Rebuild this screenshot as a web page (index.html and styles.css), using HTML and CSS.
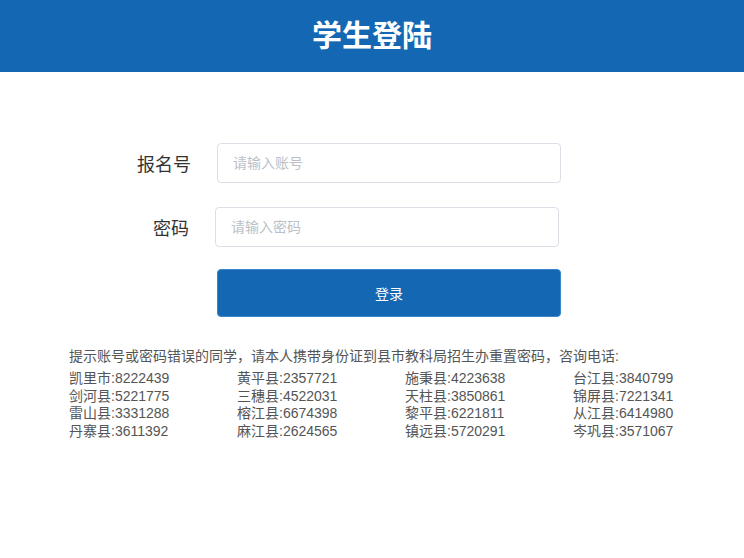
FILE: index.html
```html
<!DOCTYPE html>
<html>
<head>
  <meta charset="utf-8">
  <title>学生登陆</title>
  <link rel="stylesheet" href="styles.css">
</head>
<body>
  <div class="header">学生登陆</div>
  <div class="main">
    <form class="login">
      <div class="row">
        <label class="label" for="user">报名号</label>
        <input class="input" id="user" type="text" placeholder="请输入账号">
      </div>
      <div class="row row-pwd">
        <label class="label" for="pwd">密码</label>
        <input class="input" id="pwd" type="password" placeholder="请输入密码">
      </div>
      <div class="row">
        <span class="label"></span>
        <button class="btn" type="button">登录</button>
      </div>
    </form>
    <div class="tips">
      <p class="tips-title">提示账号或密码错误的同学，请本人携带身份证到县市教科局招生办重置密码，咨询电话:</p>
      <ul class="phones">
        <li>凯里市:8222439</li>
        <li>黄平县:2357721</li>
        <li>施秉县:4223638</li>
        <li>台江县:3840799</li>
        <li>剑河县:5221775</li>
        <li>三穗县:4522031</li>
        <li>天柱县:3850861</li>
        <li>锦屏县:7221341</li>
        <li>雷山县:3331288</li>
        <li>榕江县:6674398</li>
        <li>黎平县:6221811</li>
        <li>从江县:6414980</li>
        <li>丹寨县:3611392</li>
        <li>麻江县:2624565</li>
        <li>镇远县:5720291</li>
        <li>岑巩县:3571067</li>
      </ul>
    </div>
  </div>
</body>
</html>
```

FILE: styles.css
```css
*{margin: 0;padding: 0;box-sizing: border-box;}
ul{list-style: none;}
html, body{
  width: 100%;
  height: 100%;
  background-color: #ffffff;
  font-family: "Liberation Sans", "Noto Sans CJK SC", sans-serif;
  color: #333;
}
.header{
  height: 72px;
  line-height: 72px;
  background-color: #1468b3;
  color: #fff;
  text-align: center;
  font-size: 30px;
  font-weight: bold;
}
.main{
  padding-top: 71px;
}
.login{
  padding-left: 70px;
}
.row{
  display: flex;
  align-items: center;
  margin-bottom: 24px;
}
.row-pwd{
  margin-bottom: 22px;
}
.label{
  width: 121px;
  margin-right: 26px;
  text-align: right;
  font-size: 18px;
  color: #333;
}
.row-pwd .label{
  width: 119px;
}
.input{
  width: 344px;
  height: 40px;
  padding: 0 15px;
  border: 1px solid #dcdfe6;
  border-radius: 4px;
  font-size: 14px;
  font-family: inherit;
  color: #333;
  outline: none;
}
.input::placeholder{
  color: #bcbfc5;
}
.btn{
  width: 344px;
  height: 48px;
  background-color: #1468b3;
  border: 1px solid #3b86c8;
  border-radius: 4px;
  color: #fff;
  font-size: 14px;
  font-family: inherit;
  cursor: pointer;
}
.tips{
  padding: 5px 0 0 69px;
  color: #555;
  font-size: 14px;
}
.tips-title{
  line-height: 20px;
  margin-bottom: 4px;
  font-size: 14px;
}
.phones{
  display: grid;
  grid-template-columns: repeat(4, 168px);
  line-height: 17.7px;
}
```
